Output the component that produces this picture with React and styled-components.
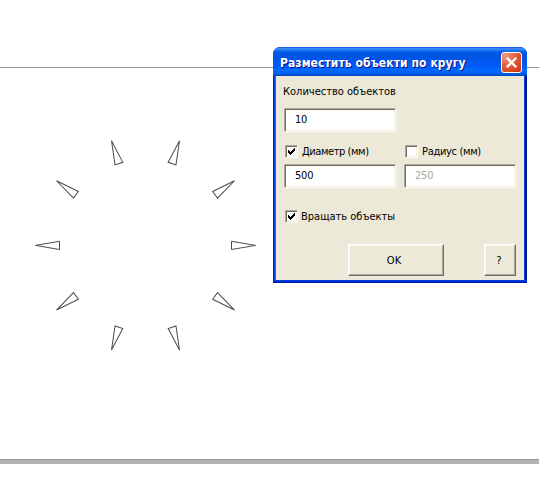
import React from "react";
import styled, { createGlobalStyle } from "styled-components";

const GlobalStyle = createGlobalStyle`
  *, *::before, *::after { box-sizing: border-box; }
  body { margin: 0; background: #fff; }
`;

const Page = styled.main`
  position: relative;
  display: flex;
  flex-direction: column;
  width: 539px;
  height: 495px;
  padding-top: 67px;
  overflow: hidden;
  background: #fff;
`;

const Canvas = styled.section`
  height: 392px;
  border-top: 1px solid #9c9c9c;
`;

const PageEdge = styled.div`
  height: 5px;
  background: #b3b3b3;
  border-top: 1px solid #999;
`;

const Drawing = styled.svg`
  display: block;
  fill: none;
  stroke: #4c4c4c;
  stroke-width: 1;
`;

const Dialog = styled.section`
  position: absolute;
  left: 273px;
  top: 47px;
  display: flex;
  flex-direction: column;
  width: 254px;
  height: 236px;
  border-radius: 7px 7px 0 0;
  overflow: hidden;
  padding: 0 3px 3px;
  background:
    linear-gradient(#0042e0, #0030cf 45%, #00149a) bottom / 100% 3px no-repeat,
    linear-gradient(90deg, #0019cf 0 1px, #0648ed 1px 2px, #166aee 2px 3px, transparent 3px) no-repeat,
    linear-gradient(270deg, #00138c 0 1px, #001ea0 1px 2px, #0441d8 2px 3px, transparent 3px) no-repeat,
    #0855dd;
  font-family: "DejaVu Sans Condensed", "DejaVu Sans", sans-serif;
  font-stretch: condensed;
  font-size: 11px;
  line-height: 14px;
  color: #000;
`;

const TitleBar = styled.header`
  display: flex;
  flex: none;
  align-items: flex-start;
  justify-content: space-between;
  height: 29px;
  margin: 0 -3px;
  padding: 5px 5px 0 7px;
  background: linear-gradient(
    #0831d9 0, #3c8cf8 1px, #227cf2 3px, #0259e5 5px, #0054e3 9px,
    #0055eb 13px, #005bf5 19px, #026afe 23px, #0062ef 26px, #0052d6 28px, #0040ab 29px
  );
`;

const Title = styled.h1`
  margin: 4px 0 0;
  font: bold 12px/15px "DejaVu Sans Condensed", "DejaVu Sans", sans-serif;
  font-stretch: condensed;
  letter-spacing: 0.08px;
  color: #fff;
  text-shadow: 1px 1px 0 #0f1089;
  white-space: nowrap;
`;

const CloseButton = styled.button`
  display: grid;
  place-items: center;
  width: 21px;
  height: 21px;
  padding: 0;
  border: 1px solid #fff;
  border-radius: 3px;
  background: radial-gradient(circle at 20% 15%, #f09a80 0, #e35e3c 45%, #d9431c 80%, #b9300c 100%);
`;

const Cross = styled.svg`
  width: 19px;
  height: 19px;
  stroke: #fff;
  stroke-width: 2.3;
`;

const Body = styled.form`
  display: flex;
  flex: 1;
  flex-direction: column;
  align-items: flex-start;
  padding: 9px 8px 4px;
  background: #ece9d8;
`;

const Label = styled.span`
  white-space: nowrap;
  letter-spacing: ${(p) => p.$tracking || 0}px;
`;

const CountLabel = styled(Label)`
  display: block;
  margin: 0 0 9px -1px;
`;

const Field = styled.input`
  display: block;
  width: 112px;
  height: 24px;
  margin: 0;
  padding: 0 0 1px 10px;
  border: 1px solid;
  border-color: #aca899 #fbfaf5 #fbfaf5 #aca899;
  border-radius: 0;
  outline: 0;
  box-shadow: inset 1px 1px 0 #716f64, inset -1px -1px 0 #f1efe2;
  background: #fff;
  color: ${(p) => (p.disabled ? "#aca899" : "#000")};
  font: inherit;
  letter-spacing: -0.2px;
`;

const Columns = styled.div`
  display: flex;
  gap: 8px;
  margin-top: 13px;
`;

const Column = styled.div`
  display: flex;
  flex-direction: column;
  gap: 6px;
`;

const Option = styled.div`
  display: flex;
  height: 13px;
  padding-left: 1px;
  gap: ${(p) => p.$gap}px;
  align-items: flex-start;
`;

const Box = styled.span`
  display: block;
  flex: none;
  width: 13px;
  height: 13px;
  padding: 1px;
  border: 1px solid;
  border-color: #aca899 #fff #fff #aca899;
  box-shadow: inset 1px 1px 0 #716f64, inset -1px -1px 0 #f1efe2;
  background: #fff;
`;

const Tick = styled.svg`
  display: block;
  width: 9px;
  height: 9px;
  fill: #000;
  shape-rendering: crispEdges;
`;

const RotateRow = styled.div`
  margin-top: 22px;
`;

const Actions = styled.div`
  display: flex;
  gap: 40px;
  margin: auto 0 0 64px;
`;

const PushButton = styled.button`
  width: ${(p) => p.$width}px;
  height: 32px;
  padding: 1px ${(p) => p.$nudge || 0}px 0 0;
  border: 1px solid;
  border-color: #fff #716f64 #716f64 #fff;
  border-radius: 0;
  background: #ece9d8;
  box-shadow: inset -1px -1px 0 #aca899, inset 1px 1px 0 #f8f7f0;
  font: inherit;
  color: #000;
`;

const ANGLES = [0, 36, 72, 108, 144, 180, 216, 252, 288, 324];

function CheckOption({ checked, tracking, gap = 4, children }) {
  return (
    <Option $gap={gap}>
      <Box role="checkbox" aria-checked={checked}>
        {checked && (
          <Tick viewBox="0 0 9 9">
            <path d="M1 3h1v1h1v1h1v-1h1v-1h1v-1h1v-1h1v3h-1v1h-1v1h-1v1h-1v1h-1v-1h-1v-1h-1z" />
          </Tick>
        )}
      </Box>
      <Label $tracking={tracking}>{children}</Label>
    </Option>
  );
}

export default function App() {
  return (
    <>
      <GlobalStyle />
      <Page>
        <Canvas>
          <Drawing width="272" height="391" viewBox="0 68 272 391">
            {ANGLES.map((angle) => (
              <path
                key={angle}
                d="M86 -4.1L110 0L86 4.1Z"
                transform={`translate(145.5 245.4) rotate(${angle})`}
              />
            ))}
          </Drawing>
        </Canvas>
        <PageEdge />
        <Dialog role="dialog">
          <TitleBar>
            <Title>Разместить объекти по кругу</Title>
            <CloseButton aria-label="Закрыть">
              <Cross viewBox="0 0 19 19">
                <path d="M4.7 4.7L14.3 14.3M14.3 4.7L4.7 14.3" />
              </Cross>
            </CloseButton>
          </TitleBar>
          <Body>
            <CountLabel>Количество объектов</CountLabel>
            <Field defaultValue="10" />
            <Columns>
              <Column>
                <CheckOption checked tracking={-0.42}>Диаметр (мм)</CheckOption>
                <Field defaultValue="500" />
              </Column>
              <Column>
                <CheckOption checked={false} tracking={-0.32}>Радиус (мм)</CheckOption>
                <Field defaultValue="250" disabled />
              </Column>
            </Columns>
            <RotateRow>
              <CheckOption checked gap={3}>Вращать объекты</CheckOption>
            </RotateRow>
            <Actions>
              <PushButton type="button" $width={96} $nudge={4}>OK</PushButton>
              <PushButton type="button" $width={32} $nudge={2}>?</PushButton>
            </Actions>
          </Body>
        </Dialog>
      </Page>
    </>
  );
}
